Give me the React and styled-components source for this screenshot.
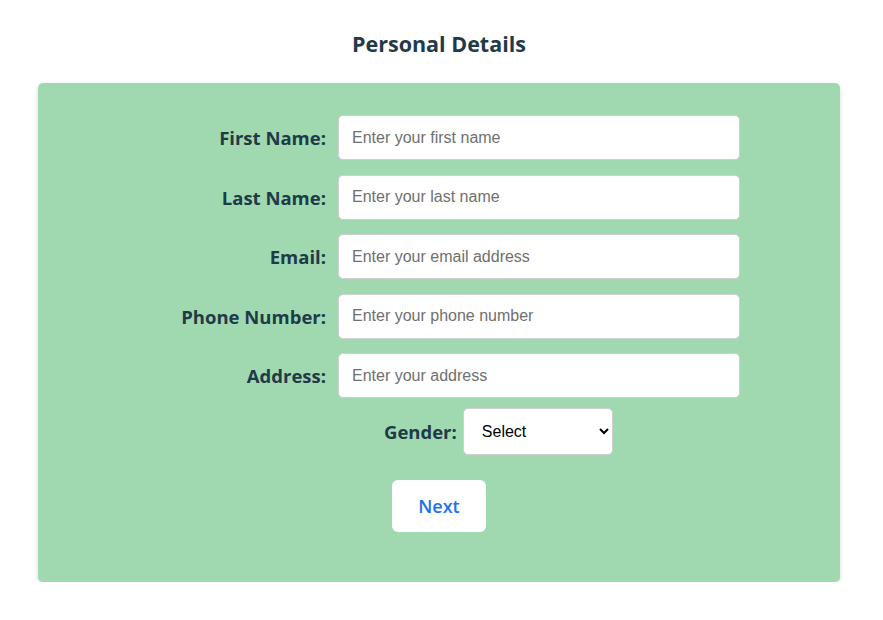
import React from 'react';
import styled, { createGlobalStyle } from 'styled-components';

const GlobalStyle = createGlobalStyle`
    body {
        margin: 0;
        background: #ffffff;
        font-family: 'Open Sans', 'Segoe UI', sans-serif;
    }
`;

const Page = styled.div`
    display: flex;
    flex-direction: column;
    align-items: center;
    padding: 30px 0 0 0;
    width: 878px;
    box-sizing: border-box;
`;

const Title = styled.h2`
    margin: 0 0 27px 0;
    font-size: 21.5px;
    font-weight: 700;
    color: #1f3a48;
    height: 26px;
    line-height: 28px;
`;

const Card = styled.form`
    width: 802px;
    box-sizing: border-box;
    background: #a0d9b0;
    border-radius: 5px;
    box-shadow: 0 2px 5px rgba(0, 0, 0, 0.15);
    padding: 32px 0 50px 0;
    display: flex;
    flex-direction: column;
`;

const Row = styled.div`
    display: grid;
    grid-template-columns: 288px 402px;
    column-gap: 12px;
    align-items: center;
    margin-bottom: 14.5px;
`;

const Label = styled.label`
    text-align: right;
    font-size: 18.5px;
    font-weight: 700;
    color: #1f3a48;
`;

const Input = styled.input`
    height: 45px;
    box-sizing: border-box;
    border: 1px solid #d0d0d0;
    border-radius: 5px;
    padding: 0 13px;
    font-family: 'Liberation Sans', Arial, sans-serif;
    font-size: 16px;
    background: #fff;
    outline: none;

    &::placeholder {
        color: #6f6f6f;
    }
`;

const GenderRow = styled.div`
    display: flex;
    align-items: center;
    gap: 6px;
    margin: -5px 0 0 346px;
`;

const Select = styled.select`
    width: 150px;
    height: 47px;
    box-sizing: border-box;
    border: 1px solid #d0d0d0;
    border-radius: 5px;
    padding: 0 10px 0 14px;
    font-family: 'Liberation Sans', Arial, sans-serif;
    font-size: 16px;
    color: #000;
    background: #fff;
`;

const ButtonContainer = styled.div`
    display: flex;
    justify-content: center;
    margin-top: 25px;
`;

const Button = styled.button`
    width: 94px;
    height: 52px;
    border: none;
    border-radius: 6px;
    background: #fff;
    color: #1a73e8;
    font-family: 'Open Sans', 'Segoe UI', sans-serif;
    font-size: 18px;
    font-weight: 600;
    cursor: pointer;
`;

const fields = [
    { id: 'first', label: 'First Name:', placeholder: 'Enter your first name' },
    { id: 'last', label: 'Last Name:', placeholder: 'Enter your last name' },
    { id: 'email', label: 'Email:', placeholder: 'Enter your email address' },
    { id: 'phone', label: 'Phone Number:', placeholder: 'Enter your phone number' },
    { id: 'address', label: 'Address:', placeholder: 'Enter your address' },
];

function App() {
    return (
        <>
            <GlobalStyle />
            <Page>
                <Title>Personal Details</Title>
                <Card onSubmit={(e) => e.preventDefault()}>
                    {fields.map((f) => (
                        <Row key={f.id}>
                            <Label htmlFor={f.id}>{f.label}</Label>
                            <Input id={f.id} placeholder={f.placeholder} />
                        </Row>
                    ))}
                    <GenderRow>
                        <Label htmlFor="gender">Gender:</Label>
                        <Select id="gender" defaultValue="">
                            <option value="">Select</option>
                            <option value="male">Male</option>
                            <option value="female">Female</option>
                            <option value="other">Other</option>
                        </Select>
                    </GenderRow>
                    <ButtonContainer>
                        <Button type="submit">Next</Button>
                    </ButtonContainer>
                </Card>
            </Page>
        </>
    );
}

export default App;
